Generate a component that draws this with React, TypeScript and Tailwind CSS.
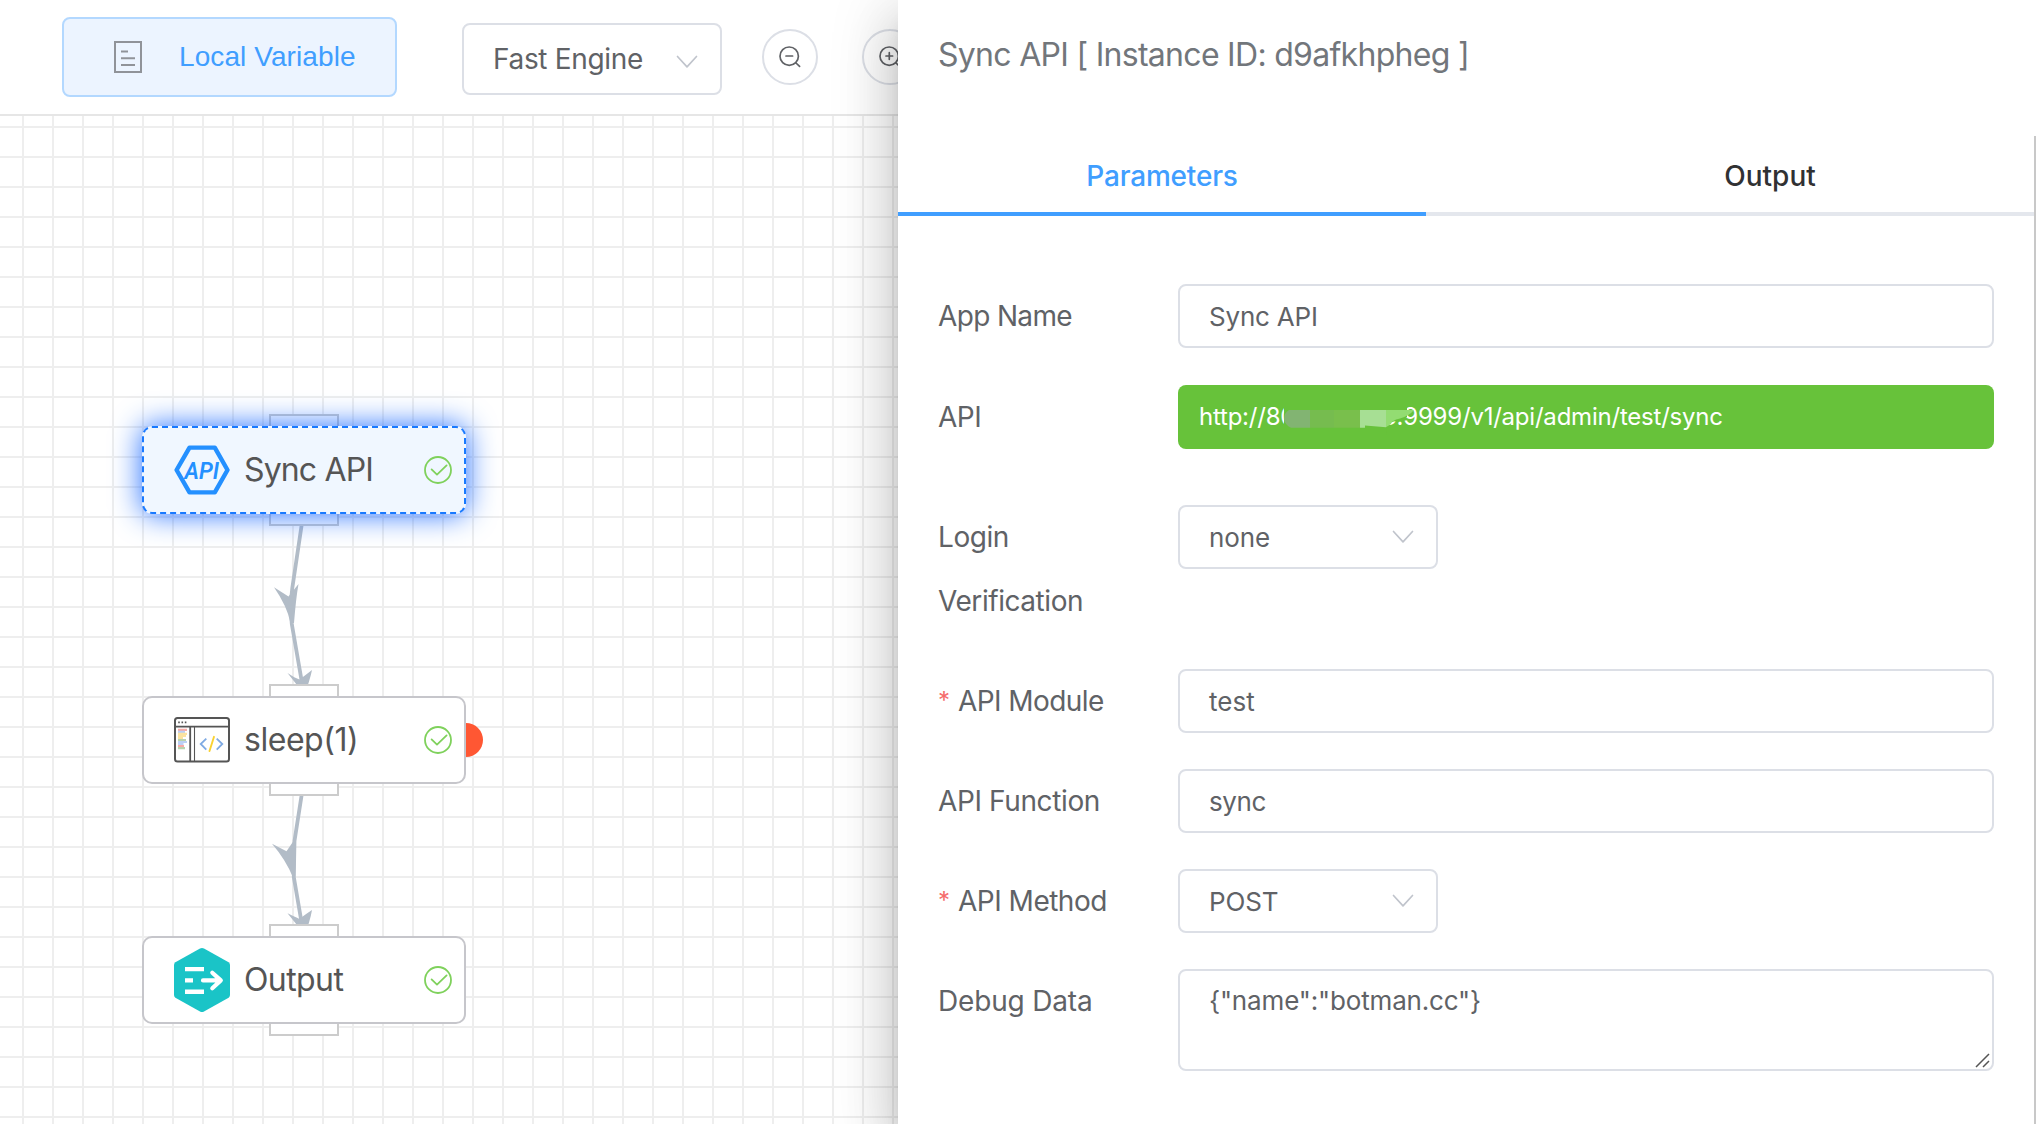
import type { ReactNode } from "react";

function ChevronDown({ className = "" }: { className?: string }) {
  return (
    <svg className={className} width="22" height="14" viewBox="0 0 22 14" fill="none" stroke="#c0c4cc" strokeWidth="1.7" strokeLinecap="round" strokeLinejoin="round">
      <path d="M1.5 1.5 11 11.8 20.5 1.5" />
    </svg>
  );
}

function Magnifier({ plus = false }: { plus?: boolean }) {
  return (
    <svg width="22" height="22" viewBox="0 0 22 22" fill="none" stroke="#606266" strokeWidth="1.7" strokeLinecap="round">
      <circle cx="10.2" cy="10.2" r="9.2" />
      <path d="M7 10h6.6M17 17l3.6 3.4" />
      {plus && <path d="M10.3 6.7v6.6" />}
    </svg>
  );
}

function DocumentIcon() {
  return (
    <svg width="28" height="32" viewBox="0 0 28 32" fill="none" stroke="#909399" strokeWidth="2">
      <rect x="1" y="1" width="26" height="30" />
      <path d="M7 10.5h7M7 17.2h14M7 24h14" />
    </svg>
  );
}

function ApiIcon() {
  return (
    <svg width="56" height="50" viewBox="0 0 56 50">
      <path d="M15.5 2.6H40.8L53.5 25 40.8 47.4H15.5L2.6 25Z" fill="none" stroke="#2490ff" strokeWidth="4.4" strokeLinejoin="round" />
      <text x="10.5" y="33.6" textLength="34.5" lengthAdjust="spacingAndGlyphs" fontFamily="Roboto, sans-serif" fontStyle="italic" fontWeight="600" fontSize="23" fill="#2490ff">
        API
      </text>
    </svg>
  );
}

function CodeWindowIcon() {
  return (
    <svg width="56" height="46" viewBox="0 0 56 46" fill="none">
      <rect x="1" y="1" width="54" height="43.6" rx="2.5" stroke="#555" strokeWidth="2" />
      <path d="M1 9.7h54M16.2 9.7v35" stroke="#555" strokeWidth="1.8" />
      <path d="M20.5 9.7v35" stroke="#555" strokeWidth="1.1" />
      <path d="M4.2 5.4h1.6M7.5 5.4h1.6M10.8 5.4h1.6" stroke="#555" strokeWidth="1.8" />
      <g strokeWidth="2.1">
        <path d="M4 12.9h9M4 29.1h6" stroke="#f7aaa6" />
        <path d="M4 14.9h7M4 25h9M4 27h5.5" stroke="#bcd0f5" />
        <path d="M4 16.9h9M4 18.9h8M4 20.9h5" stroke="#fbe3a0" />
        <path d="M4 23h8M4 31.1h7" stroke="#b9d3ad" />
      </g>
      <path d="M32.3 21.6 26.7 27l5.6 5.6M42.7 21.6l5.6 5.4-5.6 5.6" stroke="#7faae3" strokeWidth="1.8" />
      <path d="M40 19.8 35.5 34" stroke="#fad232" strokeWidth="1.9" strokeLinecap="round" />
    </svg>
  );
}

function OutputIcon() {
  return (
    <svg width="56" height="64" viewBox="0 0 56 64" fill="none">
      <path d="M26 .6Q28 -.4 30 .6L54.6 14.3Q56 15.3 56 17V47Q56 48.7 54.6 49.7L30 63.4Q28 64.4 26 63.4L1.4 49.7Q0 48.7 0 47V17Q0 15.3 1.4 14.3Z" fill="#1ac4c7" />
      <path d="M11 21.1H30M11 32.4H19M11 43.7H30" stroke="#fff" strokeWidth="4.4" />
      <path d="M29 32.4H46M38.3 24.7 46.8 32.4 38.3 40.3" stroke="#fff" strokeWidth="4.2" strokeLinecap="round" strokeLinejoin="round" />
    </svg>
  );
}

function CheckCircle() {
  return (
    <svg width="28" height="28" viewBox="0 0 28 28" fill="none" stroke="#7fd15c" strokeWidth="1.8" strokeLinecap="round" strokeLinejoin="round">
      <circle cx="14" cy="14" r="13" />
      <path d="m7.6 13.4 5.4 5.2 9.6-9.2" />
    </svg>
  );
}

type NodeProps = { place: string; icon: ReactNode; label: string; tracking: string; selected?: boolean; breakpoint?: boolean };

function FlowNode({ place, icon, label, tracking, selected = false, breakpoint = false }: NodeProps) {
  return (
    <div className={`absolute left-[142px] h-[88px] w-[324px] ${place}`}>
      <div className="absolute -top-3 left-[127px] h-[112px] w-[70px] border-2 border-[#ccc] bg-white" />
      {breakpoint && <div className="absolute left-[307px] top-[27px] size-[34px] rounded-full bg-[#ff5733]" />}
      <div
        className={`relative flex h-full items-center rounded-[10px] border-2 pl-[30px] pr-3 ${
          selected ? "border-dashed border-[#1879ff] bg-[#f0f7ff] shadow-[0_0_30px_#1f6cff]" : "border-[#c6c6cb] bg-white"
        }`}
      >
        {icon}
        <span className={`ml-[14px] flex-1 whitespace-nowrap text-[32px] leading-none text-[#555] ${tracking}`}>{label}</span>
        <CheckCircle />
      </div>
    </div>
  );
}

function Edges() {
  return (
    <svg className="absolute left-0 top-0" width="600" height="1008" viewBox="0 116 600 1008" fill="#b2bcc7" stroke="none">
      <path d="M301.8 524 Q297 556 292.3 588 Q290 606 291.8 624 L301.5 680" fill="none" stroke="#b2bcc7" strokeWidth="3.8" />
      <path d="M274 587.3 288.5 596.5 298.5 584 Q296 598 294 623 H290.5 Q287 606 274 587.3Z" />
      <path d="M287.5 673 Q295 678 299.5 679.5 Q303 677 312 670 Q310 680 304 696 Q297 684 287.5 673Z" />
      <path d="M301.8 794 294.5 841 293.8 877 301.5 922" fill="none" stroke="#b2bcc7" strokeWidth="3.8" />
      <path d="M272 843.7 286.5 851.2 293.5 841 H296 L295.2 877.5 H293Q286 860 272 843.7Z" />
      <path d="M287.5 913.3 Q295 917 299.5 919 Q303 916 312 910 Q310 922 304 936 Q297 924 287.5 913.3Z" />
    </svg>
  );
}

type RowProps = { label: string; required?: boolean; tracking?: string; className?: string; children: ReactNode };

function Row({ label, required = false, tracking = "", className = "", children }: RowProps) {
  return (
    <div className={`flex items-start ${className}`}>
      <div className="flex w-60 shrink-0 pr-16 text-[28px] leading-[64px] text-[#606266]">
        {required && <span className="mr-2 w-3 text-[24px] text-[#f56c6c]">*</span>}
        <span className={`${required ? "whitespace-nowrap" : ""} ${tracking}`}>{label}</span>
      </div>
      {children}
    </div>
  );
}

function Input({ value, tracking = "" }: { value: string; tracking?: string }) {
  return (
    <div className={`flex h-16 flex-1 items-center rounded-lg border-2 border-[#dcdfe6] px-[29px] text-[26px] text-[#606266] ${tracking}`}>
      {value}
    </div>
  );
}

function Select({ value }: { value: string }) {
  return (
    <div className="flex h-16 w-[260px] items-center justify-between rounded-lg border-2 border-[#dcdfe6] pl-[29px] pr-[22px] text-[26px] tracking-[-0.1px] text-[#606266]">
      {value}
      <ChevronDown />
    </div>
  );
}

/* Pixelated strip that hides the host part of the address. */
function Mosaic() {
  return (
    <svg className="absolute left-[105px] top-[18px]" width="134" height="32" viewBox="0 0 134 32">
      <path d="M1 0H124V14L118 17 104 20 103 32H6L1 26Z" fill="#67c23a" />
      <path d="M9 7H27V24.8H8Q2 22 1 16 1 10 6 7Z" fill="#82b472" />
      <path d="M27 7H51V24.8H27Z" fill="#76bc4f" />
      <path d="M51 7H77V24.8H51Z" fill="#79bf4c" />
      <path d="M77 7H103V24.2L82 22.5V24.8H77Z" fill="#a7df94" />
      <path d="M103 7H131Q126 13 117 15.5 108 17.5 108 21L103 24.2Z" fill="#93dc72" />
    </svg>
  );
}

function Drawer() {
  return (
    <aside className="absolute right-0 top-0 flex h-[1124px] w-[1138px] flex-col bg-white shadow-[0_16px_20px_-10px_rgba(0,0,0,0.2),0_32px_48px_4px_rgba(0,0,0,0.14),0_12px_60px_10px_rgba(0,0,0,0.12)]">
      <header className="h-[136px] shrink-0 px-10 pt-[39px] text-[32px] leading-8 tracking-[-0.71px] text-[#72767b]">Sync API [ Instance ID: d9afkhpheg ]</header>
      <div className="flex-1 border-r-2 border-[#c8c8c8]">
        <nav className="flex h-20 border-b-4 border-[#e4e7ed] text-[28px] font-medium leading-[80px]">
          <div className="-mb-1 w-[528px] border-b-4 border-[#409eff] text-center tracking-[-0.2px] text-[#409eff]">Parameters</div>
          <div className="ml-20 flex-1 text-center text-[#303133]">Output</div>
        </nav>
        <div className="flex flex-col pl-10 pr-10 pt-[68px]">
          <Row label="App Name" tracking="tracking-[-0.65px]" className="mb-9">
            <Input value="Sync API" tracking="tracking-[-0.2px]" />
          </Row>
          <Row label="API" tracking="tracking-[-0.5px]" className="mb-14 pt-px">
            <div className="relative flex h-16 flex-1 items-center whitespace-nowrap rounded-lg bg-[#67c23a] pl-[21px] text-2xl tracking-[-0.22px] text-white">
              <span className="w-[183px]">http://80</span>
              <span>3:9999/v1/api/admin/test/sync</span>
              <Mosaic />
            </div>
          </Row>
          <Row label="Login Verification" tracking="tracking-[-0.44px]" className="mb-9">
            <Select value="none" />
          </Row>
          <Row label="API Module" required tracking="tracking-[-0.57px]" className="mb-9">
            <Input value="test" />
          </Row>
          <Row label="API Function" tracking="tracking-[-0.38px]" className="mb-9">
            <Input value="sync" tracking="tracking-[-0.4px]" />
          </Row>
          <Row label="API Method" required tracking="tracking-[-0.5px]" className="mb-9">
            <Select value="POST" />
          </Row>
          <Row label="Debug Data" tracking="tracking-[-0.17px]">
            <div className="relative h-[102px] flex-1 rounded-lg border-2 border-[#dcdfe6] px-[29px] py-2.5 text-[26px] leading-[39px] tracking-[-0.16px] text-[#606266]">
              {'{"name":"botman.cc"}'}
              <svg className="absolute bottom-px right-0.5" width="15" height="15" viewBox="0 0 15 15" stroke="#555" strokeWidth="1.5">
                <path d="M1 14 14 1M8 14 14 8" />
              </svg>
            </div>
          </Row>
        </div>
      </div>
    </aside>
  );
}

export default function App() {
  return (
    <div className="relative flex h-[1124px] w-[2036px] flex-col overflow-hidden bg-white font-['Inter',sans-serif]">
      <header className="flex h-[116px] shrink-0 items-start border-b-2 border-[#e6e6e6] pl-[62px]">
        <button className="mt-[17px] flex h-20 w-[335px] items-center rounded-lg border-2 border-[#b3d8ff] bg-[#ecf4ff] pl-[50px]">
          <DocumentIcon />
          <span className="-mt-px ml-[37px] whitespace-nowrap font-['Liberation_Sans',sans-serif] text-[28px] tracking-[0.09px] text-[#409eff]">Local Variable</span>
        </button>
        <div className="ml-[65px] mt-[23px] flex h-[72px] w-[260px] items-center justify-between rounded-lg border-2 border-[#dcdfe6] pl-[29px] pr-[22px] text-[28px] tracking-[-0.33px] text-[#606266]">
          Fast Engine
          <ChevronDown className="mt-1.5" />
        </div>
        <button className="ml-10 mt-[29px] flex size-14 items-center justify-center rounded-full border-2 border-[#dcdfe6]">
          <Magnifier />
        </button>
        <button className="ml-11 mt-[29px] flex size-14 items-center justify-center rounded-full border-2 border-[#dcdfe6]">
          <Magnifier plus />
        </button>
      </header>
      <main className="relative flex-1 bg-[linear-gradient(to_right,#eee_2px,transparent_2px),linear-gradient(to_bottom,#eee_2px,transparent_2px)] bg-[size:30px_30px] bg-[position:22px_10px]">
        <Edges />
        <FlowNode place="top-[310px]" icon={<ApiIcon />} label="Sync API" tracking="tracking-[-0.85px]" selected />
        <FlowNode place="top-[580px]" icon={<CodeWindowIcon />} label="sleep(1)" tracking="tracking-[-0.46px]" breakpoint />
        <FlowNode place="top-[820px]" icon={<OutputIcon />} label="Output" tracking="tracking-[-0.6px]" />
      </main>
      <Drawer />
    </div>
  );
}
